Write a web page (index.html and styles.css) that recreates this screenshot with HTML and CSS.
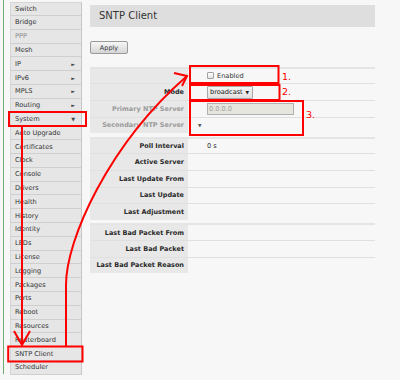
FILE: index.html
```html
<!DOCTYPE html>
<html>
<head>
<meta charset="utf-8">
<link rel="stylesheet" href="styles.css">
</head>
<body>
<div class="page">
  <nav class="sidebar">
    <div class="item">Switch</div>
    <div class="item">Bridge</div>
    <div class="item dim">PPP</div>
    <div class="item">Mesh</div>
    <div class="item">IP <span class="arr">&#9658;</span></div>
    <div class="item">IPv6 <span class="arr">&#9658;</span></div>
    <div class="item">MPLS <span class="arr">&#9658;</span></div>
    <div class="item">Routing <span class="arr">&#9658;</span></div>
    <div class="item">System <span class="arr">&#9660;</span></div>
    <div class="item">Auto Upgrade</div>
    <div class="item">Certificates</div>
    <div class="item">Clock</div>
    <div class="item">Console</div>
    <div class="item">Drivers</div>
    <div class="item">Health</div>
    <div class="item">History</div>
    <div class="item">Identity</div>
    <div class="item">LEDs</div>
    <div class="item">License</div>
    <div class="item">Logging</div>
    <div class="item">Packages</div>
    <div class="item">Ports</div>
    <div class="item">Reboot</div>
    <div class="item">Resources</div>
    <div class="item">Routerboard</div>
    <div class="item">SNTP Client</div>
    <div class="item">Scheduler</div>
  </nav>
  <main class="content">
    <div class="title">SNTP Client</div>
    <div class="toolbar"><button class="btn">Apply</button></div>
    <div class="section">
      <div class="row"><div class="lbl"></div><div class="val"><span class="chk"></span>Enabled</div></div>
      <div class="row"><div class="lbl">Mode</div><div class="val"><span class="select">broadcast <span class="sarr">&#9660;</span></span></div></div>
      <div class="row"><div class="lbl off">Primary NTP Server</div><div class="val"><span class="input">0.0.0.0</span></div></div>
      <div class="row"><div class="lbl off">Secondary NTP Server</div><div class="val near"><span class="tri">&#9660;</span></div></div>
    </div>
    <div class="section">
      <div class="row"><div class="lbl">Poll Interval</div><div class="val">0 s</div></div>
      <div class="row"><div class="lbl">Active Server</div><div class="val"></div></div>
      <div class="row"><div class="lbl">Last Update From</div><div class="val"></div></div>
      <div class="row"><div class="lbl">Last Update</div><div class="val"></div></div>
      <div class="row"><div class="lbl">Last Adjustment</div><div class="val"></div></div>
    </div>
    <div class="section">
      <div class="row"><div class="lbl">Last Bad Packet From</div><div class="val"></div></div>
      <div class="row"><div class="lbl">Last Bad Packet</div><div class="val"></div></div>
      <div class="row"><div class="lbl">Last Bad Packet Reason</div><div class="val"></div></div>
    </div>
  </main>
  <svg class="annot" width="400" height="380" viewBox="0 0 400 380">
    <g fill="none" stroke="#f00" stroke-width="2">
      <rect x="9" y="112" width="77" height="14"/>
      <rect x="8.2" y="346.5" width="74.3" height="15"/>
      <rect x="190" y="66" width="88.5" height="17"/>
      <rect x="190" y="85" width="89.5" height="15"/>
      <rect x="190" y="101" width="113" height="34"/>
      <path d="M22,127 L22,345"/>
      <path d="M14,331 L22,345 L30,331"/>
      <path d="M66,346 L66,285 C66,240 108,145 187,76"/>
      <path d="M174,73 L187,76 L182,86"/>
    </g>
    <g fill="#f00" font-family="DejaVu Sans, sans-serif" font-size="9.5">
      <text x="282" y="80">1.</text>
      <text x="282" y="95">2.</text>
      <text x="306" y="118">3.</text>
    </g>
  </svg>
</div>
</body>
</html>
```
FILE: styles.css
```css
html, body {
  margin: 0;
  padding: 0;
}
body {
  background: #f7f7f7;
  font-family: "DejaVu Sans", Verdana, sans-serif;
  color: #333;
  width: 400px;
  height: 380px;
  overflow: hidden;
}
.page {
  position: relative;
  display: flex;
  align-items: flex-start;
  height: 380px;
}
.sidebar {
  margin-left: 3px;
  border-left: 1px solid #72a872;
  padding: 2.2px 0 0 6px;
  width: 72px;
  height: 372px;
  flex: none;
}
.item {
  box-sizing: border-box;
  height: 13.8px;
  display: flex;
  align-items: center;
  justify-content: space-between;
  padding: 0 6px 0 4px;
  background: #e6e6e6;
  border-left: 1px solid #d6d6d6;
  border-right: 1px solid #c6c6c6;
  border-bottom: 1px solid #cfcfcf;
  font-size: 6.6px;
  color: #333;
  white-space: nowrap;
}
.item:first-child {
  border-top: 1px solid #d6d6d6;
}
.item.dim {
  color: #8a8a8a;
}
.arr {
  font-size: 5px;
  color: #444;
}
.content {
  margin-left: 8px;
  width: 285px;
  flex: none;
}
.title {
  margin-top: 5px;
  height: 22px;
  line-height: 22px;
  background: #dedede;
  padding-left: 9px;
  font-size: 10px;
  color: #333;
}
.toolbar {
  margin-top: 14px;
  height: 13px;
  display: flex;
}
.btn {
  width: 38px;
  height: 13px;
  padding: 0;
  font-family: inherit;
  font-size: 6.5px;
  color: #333;
  border: 1px solid #9a9a9a;
  border-radius: 2px;
  background: linear-gradient(#f6f6f6, #d6d6d6);
}
.section {
  margin-top: 3.33px;
}
.toolbar + .section {
  margin-top: 12.67px;
}
.row {
  box-sizing: border-box;
  height: 16.67px;
  display: flex;
  border-top: 1px solid #e0e0e0;
}
.section .row:first-child {
  border-top: 2px solid #e4e4e4;
}
.lbl {
  width: 98px;
  box-sizing: border-box;
  flex: none;
  background: #e8e8e8;
  display: flex;
  align-items: center;
  justify-content: flex-end;
  padding-right: 4px;
  font-size: 6.5px;
  font-weight: bold;
  color: #2a2a2a;
  white-space: nowrap;
}
.lbl.off {
  color: #9a9a9a;
}
.val {
  flex: 1;
  display: flex;
  align-items: center;
  padding-left: 19px;
  font-size: 6.6px;
  color: #333;
}
.val.near {
  padding-left: 10px;
}
.chk {
  width: 5px;
  height: 5px;
  border: 1px solid #a0a0a0;
  border-radius: 1px;
  background: linear-gradient(#fff, #e4e4e4);
  margin-right: 3px;
}
.select {
  box-sizing: border-box;
  width: 46px;
  height: 13px;
  display: flex;
  align-items: center;
  justify-content: space-between;
  padding: 0 3px 0 2px;
  border: 1px solid #a8a8a8;
  border-radius: 1px;
  background: linear-gradient(#f4f4f4, #e0e0e0);
  font-size: 6.6px;
  color: #222;
}
.sarr {
  font-size: 4.5px;
}
.input {
  box-sizing: border-box;
  width: 87px;
  height: 12px;
  display: flex;
  align-items: center;
  padding-left: 1px;
  border: 1px solid #b0b0b0;
  background: #e6e6de;
  font-size: 6.6px;
  color: #a0a0a0;
}
.tri {
  font-size: 4.5px;
  color: #555;
}
.annot {
  position: absolute;
  left: 0;
  top: 0;
  pointer-events: none;
}
```
